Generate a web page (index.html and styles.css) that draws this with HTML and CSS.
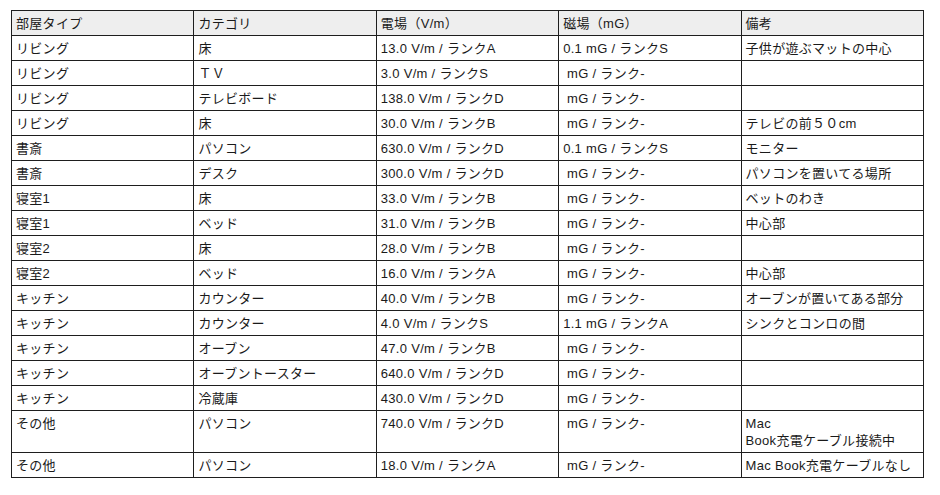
FILE: index.html
```html
<!DOCTYPE html>
<html lang="ja">
<head>
<meta charset="utf-8">
<link rel="stylesheet" href="styles.css">
</head>
<body>
<table class="data">
  <colgroup><col class="c"><col class="c"><col class="c"><col class="c"><col class="c"></colgroup>
  <thead>
    <tr><th>部屋タイプ</th><th>カテゴリ</th><th>電場（V/m）</th><th>磁場（mG）</th><th>備考</th></tr>
  </thead>
  <tbody>
    <tr><td>リビング</td><td>床</td><td>13.0 V/m / ランクA</td><td>0.1 mG / ランクS</td><td>子供が遊ぶマットの中心</td></tr>
    <tr><td>リビング</td><td>ＴＶ</td><td>3.0 V/m / ランクS</td><td>&nbsp;mG / ランク-</td><td></td></tr>
    <tr><td>リビング</td><td>テレビボード</td><td>138.0 V/m / ランクD</td><td>&nbsp;mG / ランク-</td><td></td></tr>
    <tr><td>リビング</td><td>床</td><td>30.0 V/m / ランクB</td><td>&nbsp;mG / ランク-</td><td>テレビの前５０cm</td></tr>
    <tr><td>書斎</td><td>パソコン</td><td>630.0 V/m / ランクD</td><td>0.1 mG / ランクS</td><td>モニター</td></tr>
    <tr><td>書斎</td><td>デスク</td><td>300.0 V/m / ランクD</td><td>&nbsp;mG / ランク-</td><td>パソコンを置いてる場所</td></tr>
    <tr><td>寝室1</td><td>床</td><td>33.0 V/m / ランクB</td><td>&nbsp;mG / ランク-</td><td>ベットのわき</td></tr>
    <tr><td>寝室1</td><td>ベッド</td><td>31.0 V/m / ランクB</td><td>&nbsp;mG / ランク-</td><td>中心部</td></tr>
    <tr><td>寝室2</td><td>床</td><td>28.0 V/m / ランクB</td><td>&nbsp;mG / ランク-</td><td></td></tr>
    <tr><td>寝室2</td><td>ベッド</td><td>16.0 V/m / ランクA</td><td>&nbsp;mG / ランク-</td><td>中心部</td></tr>
    <tr><td>キッチン</td><td>カウンター</td><td>40.0 V/m / ランクB</td><td>&nbsp;mG / ランク-</td><td>オーブンが置いてある部分</td></tr>
    <tr><td>キッチン</td><td>カウンター</td><td>4.0 V/m / ランクS</td><td>1.1 mG / ランクA</td><td>シンクとコンロの間</td></tr>
    <tr><td>キッチン</td><td>オーブン</td><td>47.0 V/m / ランクB</td><td>&nbsp;mG / ランク-</td><td></td></tr>
    <tr><td>キッチン</td><td>オーブントースター</td><td>640.0 V/m / ランクD</td><td>&nbsp;mG / ランク-</td><td></td></tr>
    <tr><td>キッチン</td><td>冷蔵庫</td><td>430.0 V/m / ランクD</td><td>&nbsp;mG / ランク-</td><td></td></tr>
    <tr><td>その他</td><td>パソコン</td><td>740.0 V/m / ランクD</td><td>&nbsp;mG / ランク-</td><td>Mac<br>Book充電ケーブル接続中</td></tr>
    <tr><td>その他</td><td>パソコン</td><td>18.0 V/m / ランクA</td><td>&nbsp;mG / ランク-</td><td>Mac Book充電ケーブルなし</td></tr>
  </tbody>
</table>
</body>
</html>
```
FILE: styles.css
```css
html, body {
  margin: 0;
  padding: 0;
  background: #ffffff;
}
body {
  padding: 10px 0 0 11px;
  font-family: "Liberation Sans", "Noto Sans CJK JP", sans-serif;
  font-size: 13px;
  letter-spacing: 0.3px;
  color: #1a1a1a;
}
.data {
  border-collapse: collapse;
  table-layout: fixed;
  width: 913px;
}
.data .c {
  width: 20%;
}
.data th,
.data td {
  border: 1px solid #1e1e1e;
  padding: 4px 4px 3px 4px;
  line-height: 17px;
  text-align: left;
  vertical-align: top;
  font-weight: normal;
  white-space: nowrap;
  overflow: hidden;
}
.data th {
  background: #eeeeee;
}
```
